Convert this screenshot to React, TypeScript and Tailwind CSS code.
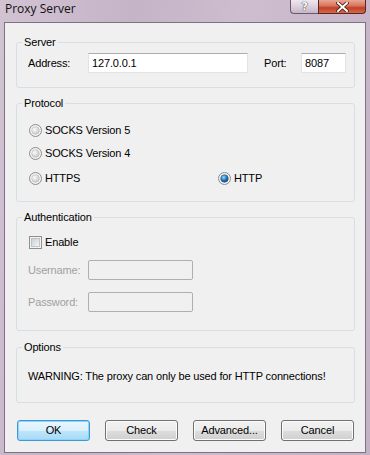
import React from 'react';

const Radio = ({ checked }: { checked?: boolean }) => (
  <svg width="13" height="13" viewBox="0 0 13 13" className="shrink-0">
    <defs>
      <radialGradient id="rg-off" cx="0.35" cy="0.35" r="0.75">
        <stop offset="0" stopColor="#fbfbfb" />
        <stop offset="1" stopColor="#c4c4c4" />
      </radialGradient>
      <radialGradient id="rg-on" cx="0.4" cy="0.35" r="0.7">
        <stop offset="0" stopColor="#9bdcff" />
        <stop offset="0.55" stopColor="#1f78bd" />
        <stop offset="1" stopColor="#0b3a66" />
      </radialGradient>
    </defs>
    <circle cx="6.5" cy="6.5" r="6" fill="#f2f2f2" stroke="#8c8c8c" strokeWidth="1" />
    <circle
      cx="6.5"
      cy="6.5"
      r="3.8"
      fill={checked ? 'url(#rg-on)' : 'url(#rg-off)'}
      stroke={checked ? '#3c5f80' : '#b8b8b8'}
      strokeWidth="0.6"
    />
  </svg>
);

const Checkbox = () => (
  <svg width="13" height="13" viewBox="0 0 13 13" className="shrink-0">
    <defs>
      <linearGradient id="cb-fill" x1="0" y1="0" x2="1" y2="1">
        <stop offset="0" stopColor="#c9cdd2" />
        <stop offset="1" stopColor="#f7f7f7" />
      </linearGradient>
    </defs>
    <rect x="0.5" y="0.5" width="12" height="12" fill="#f4f4f4" stroke="#8e8f8f" />
    <rect x="2.5" y="2.5" width="8" height="8" fill="url(#cb-fill)" stroke="#b5b8bd" strokeWidth="0.8" />
  </svg>
);

const Group = ({ title, className, children }: { title: string; className: string; children: React.ReactNode }) => (
  <div className={`ml-[11px] mr-[10px] rounded-[3px] border border-[#d5dfe5] ${className}`}>
    <div className="-mt-[8px] ml-[5px] w-fit bg-[#f0f0f0] px-[2px] leading-[14px]">{title}</div>
    {children}
  </div>
);

const Button = ({ label, primary }: { label: string; primary?: boolean }) => (
  <button
    className={
      primary
        ? 'h-[21px] w-[73px] rounded-[3px] border border-[#3c98d8] bg-[linear-gradient(#eaf6fd_0%,#d9f0fc_50%,#bee6fd_51%,#a7d9f5_100%)] shadow-[inset_0_0_0_1px_#8fd3f7] text-black'
        : 'h-[21px] w-[73px] rounded-[3px] border border-[#707070] bg-[linear-gradient(#f2f2f2_0%,#ebebeb_50%,#dddddd_51%,#cfcfcf_100%)] shadow-[inset_0_0_0_1px_#fcfcfc] text-black'
    }
  >
    {label}
  </button>
);

export default function App() {
  return (
    <div className="h-[455px] w-[370px] overflow-hidden bg-[linear-gradient(100deg,#d2c3d3_0%,#c5b3c7_30%,#cdbdce_55%,#c3b1c5_100%)] font-['Liberation_Sans',Arial,sans-serif] text-[11px] tracking-[-0.15px] text-black">
      {/* title bar */}
      <div className="flex h-[22px] items-start justify-between">
        <div className="ml-[5px] mt-[1px] font-['Open_Sans',sans-serif] text-[12px] leading-[16px] tracking-normal text-[#111]">Proxy Server</div>
        <div className="mr-[4px] flex h-[14px]">
          <div className="flex h-[14px] w-[28px] items-center justify-center rounded-bl-[4px] border border-t-0 border-r-0 border-[#6a5b6c] bg-[linear-gradient(#efe7ef_0%,#ddd0de_50%,#c6b5c7_100%)] font-['DejaVu_Sans',sans-serif] text-[11px] font-bold leading-none text-white [text-shadow:0_0_1px_#333,0_0_1px_#333]">
            ?
          </div>
          <div className="flex h-[14px] w-[48px] items-center justify-center rounded-br-[4px] border border-t-0 border-[#5b2620] bg-[linear-gradient(#e9a792_0%,#d8735d_45%,#c23f28_60%,#d46a4c_100%)]">
            <svg width="13" height="10" viewBox="0 0 13 10">
              <path d="M2 1 L11 9 M11 1 L2 9" stroke="#4a1d15" strokeWidth="3.6" strokeLinecap="square" />
              <path d="M2 1 L11 9 M11 1 L2 9" stroke="#ffffff" strokeWidth="2" strokeLinecap="square" />
            </svg>
          </div>
        </div>
      </div>

      {/* client area */}
      <div className="ml-[4px] mr-[4px] flex h-[431px] flex-col border border-[#7c7382] bg-[#f0f0f0]">
        <Group title="Server" className="mt-[19px] pb-[14px]">
          <div className="mt-[4px] flex h-[20px] items-center pl-[11px]">
            <span className="w-[60px]">Address:</span>
            <div className="flex h-[20px] w-[160px] items-center border border-[#e2e3ea] border-t-[#abadb3] bg-white pl-[3px]">127.0.0.1</div>
            <span className="ml-[16px] w-[37px]">Port:</span>
            <div className="flex h-[20px] w-[45px] items-center border border-[#e2e3ea] border-t-[#abadb3] bg-white pl-[3px]">8087</div>
          </div>
        </Group>

        <Group title="Protocol" className="mt-[15px] pb-[16px]">
          <div className="mt-[14px] flex h-[13px] items-center gap-[3px] pl-[12px]">
            <Radio />
            <span>SOCKS Version 5</span>
          </div>
          <div className="mt-[10px] flex h-[13px] items-center gap-[3px] pl-[12px]">
            <Radio />
            <span>SOCKS Version 4</span>
          </div>
          <div className="mt-[12px] flex h-[13px] items-center pl-[12px]">
            <div className="flex w-[189px] items-center gap-[3px]">
              <Radio />
              <span>HTTPS</span>
            </div>
            <div className="flex items-center gap-[3px]">
              <Radio checked />
              <span>HTTP</span>
            </div>
          </div>
        </Group>

        <Group title="Authentication" className="mt-[15px] pb-[18px]">
          <div className="mt-[12px] flex h-[13px] items-center gap-[3px] pl-[12px]">
            <Checkbox />
            <span>Enable</span>
          </div>
          <div className="mt-[11px] flex h-[20px] items-center pl-[11px] text-[#a0a0a0]">
            <span className="w-[60px]">Username:</span>
            <div className="h-[20px] w-[105px] rounded-[2px] border border-[#afafaf] bg-[#f0f0f0]" />
          </div>
          <div className="mt-[12px] flex h-[20px] items-center pl-[11px] text-[#a0a0a0]">
            <span className="w-[60px]">Password:</span>
            <div className="h-[20px] w-[105px] rounded-[2px] border border-[#afafaf] bg-[#f0f0f0]" />
          </div>
        </Group>

        <Group title="Options" className="mt-[16px] pb-[19px]">
          <div className="mt-[15px] flex h-[14px] items-center pl-[11px]">
            WARNING: The proxy can only be used for HTTP connections!
          </div>
        </Group>

        <div className="mt-[17px] flex justify-between pl-[12px] pr-[11px]">
          <Button label="OK" primary />
          <Button label="Check" />
          <Button label="Advanced..." />
          <Button label="Cancel" />
        </div>
      </div>
    </div>
  );
}
